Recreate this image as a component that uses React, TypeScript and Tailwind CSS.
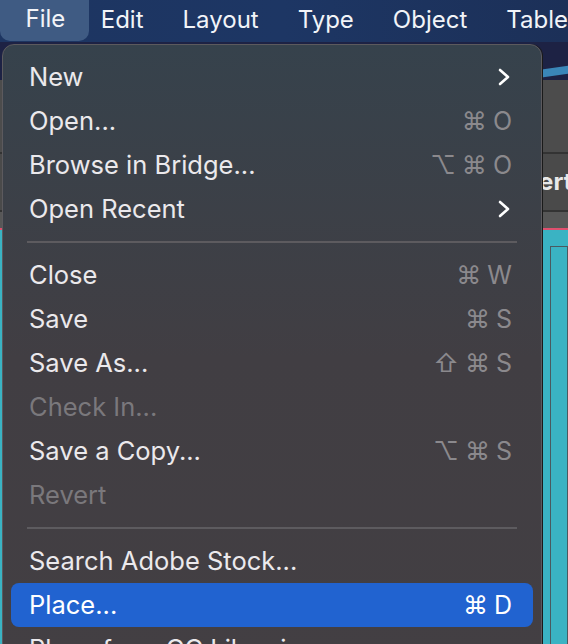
import { Fragment } from "react"

type Item =
  | { kind: "sep" }
  | {
      kind: "item"
      label: string
      keys?: string[]
      submenu?: boolean
      disabled?: boolean
      active?: boolean
    }

const items: Item[] = [
  { kind: "item", label: "New", submenu: true },
  { kind: "item", label: "Open...", keys: ["⌘", "O"] },
  { kind: "item", label: "Browse in Bridge...", keys: ["⌥", "⌘", "O"] },
  { kind: "item", label: "Open Recent", submenu: true },
  { kind: "sep" },
  { kind: "item", label: "Close", keys: ["⌘", "W"] },
  { kind: "item", label: "Save", keys: ["⌘", "S"] },
  { kind: "item", label: "Save As...", keys: ["⇧", "⌘", "S"] },
  { kind: "item", label: "Check In...", disabled: true },
  { kind: "item", label: "Save a Copy...", keys: ["⌥", "⌘", "S"] },
  { kind: "item", label: "Revert", disabled: true },
  { kind: "sep" },
  { kind: "item", label: "Search Adobe Stock..." },
  { kind: "item", label: "Place...", keys: ["⌘", "D"], active: true },
  { kind: "item", label: "Place from CC Libraries..." },
]

const font = { fontFamily: "Inter, 'DejaVu Sans', sans-serif" }

function Chevron() {
  return (
    <svg width="14" height="18" viewBox="0 0 14 18" className="mr-[1px]">
      <polyline
        points="3,2 11,9 3,16"
        fill="none"
        stroke="#ffffff"
        strokeWidth="2.6"
        strokeLinecap="round"
        strokeLinejoin="round"
      />
    </svg>
  )
}

function MenuRow({ item }: { item: Extract<Item, { kind: "item" }> }) {
  const text = item.disabled
    ? "text-[#7a787c]"
    : item.active
      ? "text-white"
      : "text-[#ebe9ec]"
  return (
    <div
      className={`mx-[8px] flex h-[44px] items-center justify-between rounded-[8px] pl-[18px] pr-[21px] ${
        item.active ? "bg-[#2163d0]" : ""
      }`}
    >
      <span className={`whitespace-nowrap text-[25.5px] leading-none ${text}`}>
        {item.label}
      </span>
      {item.submenu && <Chevron />}
      {item.keys && (
        <span
          className={`flex items-center gap-[6px] text-[25px] leading-none ${
            item.active ? "text-white" : "text-[#8b898d]"
          }`}
        >
          {item.keys.map((k, i) => (
            <span key={i}>{k}</span>
          ))}
        </span>
      )}
    </div>
  )
}

export default function App() {
  return (
    <div
      className="relative h-[644px] w-[568px] overflow-hidden bg-[#3ab3c3]"
      style={font}
    >
      {/* menu bar */}
      <div className="flex h-[42px] items-center bg-gradient-to-r from-[#1d3561] via-[#1d3664] to-[#1c3058] pb-[3px] text-[24px] text-[#f2f4f8]">
        <div className="flex h-[41px] w-[92px] items-center justify-center self-start rounded-b-[10px] bg-[#3f5b83] pb-[3px] pl-[2px]">
          File
        </div>
        <div className="ml-[12px] flex gap-[39px]">
          <span>Edit</span>
          <span>Layout</span>
          <span>Type</span>
          <span>Object</span>
          <span className="whitespace-nowrap">Table</span>
        </div>
      </div>

      {/* app window behind the menu */}
      <div className="flex flex-col">
        <div className="relative h-[38px] overflow-hidden bg-[#1d2244]">
          <div className="absolute -right-[10px] top-[28px] h-[8px] w-[80px] -rotate-[8deg] bg-[#3a86b8]" />
        </div>
        <div className="h-[72px] bg-[#4c4c4c]" />
        <div className="h-[2px] bg-[#333333]" />
        <div className="flex h-[56px] items-center whitespace-nowrap bg-[#4a4a4a] pl-[504px] text-[24px] font-bold text-[#e8e8e8]">
          Insert
        </div>
        <div className="h-[2px] bg-[#333333]" />
        <div className="h-[16px] bg-[#575757]" />
        <div className="h-[2px] bg-[#e0506e]" />
        <div className="ml-[550px] mt-[16px] h-[420px] border border-[#4a5a60]" />
      </div>

      {/* dropdown menu */}
      <div className="absolute left-[2px] top-[44px] w-[540px] rounded-t-[12px] border border-[#5c5a5e] bg-gradient-to-b from-[#36424c] via-[#413e43] to-[#433f43] pt-[10px] shadow-[1px_0_0_#1a1a1a]">
        {items.map((it, i) =>
          it.kind === "sep" ? (
            <div key={i} className="flex h-[22px] items-center px-[24px]">
              <div className="h-[2px] w-full bg-[#5d5b5f]" />
            </div>
          ) : (
            <Fragment key={i}>
              <MenuRow item={it} />
            </Fragment>
          )
        )}
      </div>
    </div>
  )
}
